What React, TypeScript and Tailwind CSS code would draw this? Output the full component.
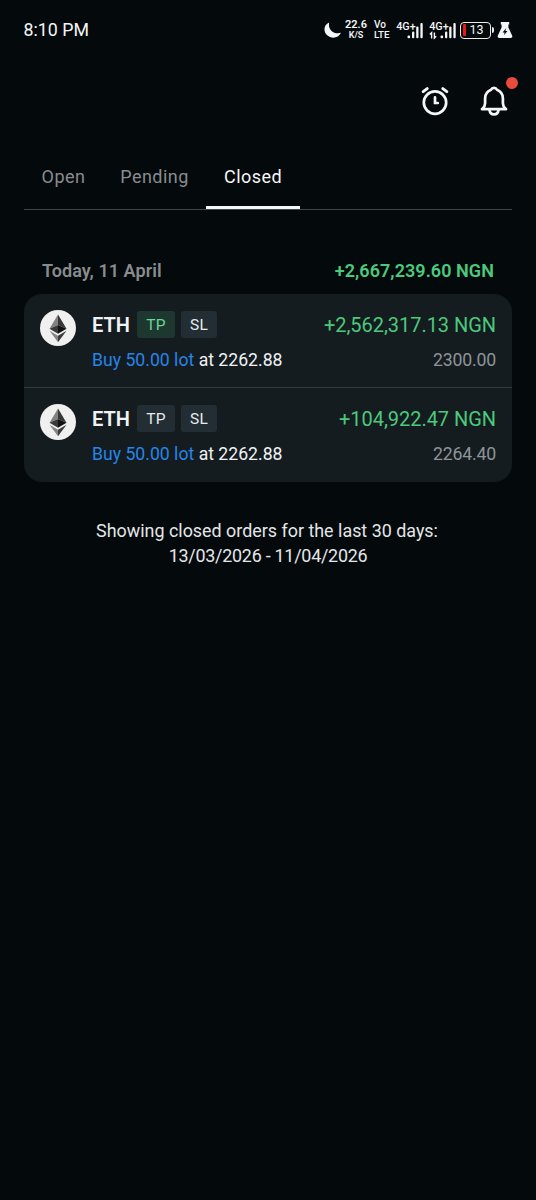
import React from "react";

function Moon() {
  return (
    <svg width="18" height="18" viewBox="0 0 18 18" fill="#f4f6f7">
      <path d="M5.2 1.4 C-.3 3.6 -1.1 10.4 3.2 14.3 C7.4 18.2 14.6 17.2 17 11.8 C10 13.6 3.7 9.2 5.2 1.4 Z" />
    </svg>
  );
}

function Signal({ arrows = false }: { arrows?: boolean }) {
  return (
    <svg width="28" height="25" viewBox="0 -3 28 25" fill="#f4f6f7">
      <text x="0.2" y="9.4" fontSize="11" fontWeight="500" fontFamily="Roboto, sans-serif" textLength="19.5" lengthAdjust="spacingAndGlyphs">
        4G+
      </text>
      {arrows && (
        <path d="M2.6 17.4V11.8L0.8 13.6M5.4 11.4V17L7.2 15.2" fill="none" stroke="#f4f6f7" strokeWidth="1.4" />
      )}
      <rect x="11.5" y="14.4" width="2.6" height="2.8" rx="1" />
      <rect x="16" y="10.4" width="2.3" height="6.8" rx="1" />
      <rect x="20.2" y="5.4" width="2.3" height="11.8" rx="1" />
      <rect x="24.4" y="2" width="2.3" height="15.2" rx="1" />
    </svg>
  );
}

function Battery() {
  return (
    <div className="flex items-center">
      <div className="flex h-[17px] w-[31px] items-center rounded-[4px] border-[1.5px] border-[#e9ebec] pl-[2px]">
        <span className="h-[12px] w-[3px] shrink-0 rounded-[1px] bg-[#f01414]" />
        <span className="w-[21px] text-center text-[12.5px] leading-none">13</span>
      </div>
      <span className="ml-px h-[6px] w-[2px] rounded-r bg-[#e9ebec]" />
    </div>
  );
}

function Flask() {
  return (
    <svg width="16" height="18" viewBox="0 0 16 18">
      <path d="M3.8 1H12.2V3.6H11.4V6.5L15 14.2C15.8 16 15.2 17 13.7 17H2.3C.8 17 .2 16 1 14.2L4.6 6.5V3.6H3.8Z" fill="#f4f6f7" />
      <path d="M9 7.3L5.6 11.4H7.6L7 14.2L10.4 10.1H8.4Z" fill="#04090c" />
    </svg>
  );
}

function StatusBar() {
  return (
    <header className="flex h-[60px] items-center justify-between pr-[23px] pl-[23.5px] text-[#f4f6f7]">
      <span className="text-[17.8px] leading-none">8:10 PM</span>
      <div className="flex items-center">
        <Moon />
        <div className="ml-[3px] flex w-[22px] flex-col items-center text-[11px] leading-[10px] font-semibold">
          <span className="relative -top-px">22.6</span>
          <span className="text-[9px] leading-[9px]">K/S</span>
        </div>
        <div className="ml-[7px] flex w-[16px] flex-col text-[10px] leading-[9.5px] font-medium">
          <span className="relative -top-[0.5px]">Vo</span>
          <span className="text-[9.8px]">LTE</span>
        </div>
        <div className="ml-[6px] flex gap-[5px]">
          <Signal />
          <Signal arrows />
        </div>
        <div className="ml-[3px]">
          <Battery />
        </div>
        <div className="ml-[3px]">
          <Flask />
        </div>
      </div>
    </header>
  );
}

function AlarmIcon() {
  return (
    <svg width="30" height="30" viewBox="0 0 30 30" fill="none" stroke="#f4f6f7" strokeWidth="2.7" strokeLinecap="round">
      <circle cx="15" cy="16.6" r="11.2" />
      <path d="M15 11.4V17H17.8" strokeLinejoin="miter" />
      <path d="M3.2 5.6L7.2 2.6M26.8 5.6L22.8 2.6" strokeWidth="3" />
    </svg>
  );
}

function BellIcon() {
  return (
    <svg width="30" height="32" viewBox="0 0 30 32" fill="none" stroke="#f4f6f7" strokeWidth="2.7" strokeLinecap="round" strokeLinejoin="round">
      <path d="M3 24.2H27M3.4 23.8C5.3 22 6.1 20.6 6.1 18.2V13.4C6.1 9.2 8.4 6.3 12 4.8C13.2 2.2 16.8 2.2 18 4.8C21.6 6.3 23.9 9.2 23.9 13.4V18.2C23.9 20.6 24.7 22 26.6 23.8" />
      <path d="M10.6 25.5C11 28 12.8 29.4 15 29.4C17.2 29.4 19 28 19.4 25.5" />
    </svg>
  );
}

function EthIcon() {
  return (
    <svg className="mt-px shrink-0" width="36" height="36" viewBox="0 0 36 36">
      <circle cx="18" cy="18" r="18" fill="#f0f0f0" />
      <path d="M18 4.5L9.5 18.8L18 15Z" fill="#828282" />
      <path d="M18 4.5L26.5 18.8L18 15Z" fill="#373737" />
      <path d="M9.5 18.8L18 15V23.8Z" fill="#393939" />
      <path d="M26.5 18.8L18 15V23.8Z" fill="#121212" />
      <path d="M9.5 20.8L18 25.7V32.3Z" fill="#858585" />
      <path d="M26.5 20.8L18 25.7V32.3Z" fill="#3c3c3b" />
    </svg>
  );
}

function Tag({ label, active = false }: { label: string; active?: boolean }) {
  return (
    <span
      className={
        "flex h-[27px] items-center justify-center rounded-[3px] pt-[2px] text-[15.5px] leading-none tracking-[0.2px] " +
        (label === "TP" ? "w-[38px] " : "w-[36px] ") +
        (active ? "bg-[#1e3730] text-[#6bd699]" : "bg-[#232d34] text-[#e6eaec]")
      }
    >
      {label}
    </span>
  );
}

type Order = { profit: string; close: string; tp: boolean };

const orders: Order[] = [
  { profit: "+2,562,317.13 NGN", close: "2300.00", tp: true },
  { profit: "+104,922.47 NGN", close: "2264.40", tp: false },
];

function OrderRow({ order }: { order: Order }) {
  return (
    <li className="flex h-[94px] border-b border-[#343c42] px-[16px] pt-[15px] last:border-b-0">
      <EthIcon />
      <div className="ml-[16px] flex-1">
        <div className="flex h-[32px] items-center">
          <span className="w-[45px] text-[20px] font-semibold text-[#f0f3f4]">ETH</span>
          <div className="-mt-px flex gap-[6px]">
            <Tag label="TP" active={order.tp} />
            <Tag label="SL" />
          </div>
          <span className="ml-auto text-[20px] tracking-[-0.04px] text-[#4cc97c]">{order.profit}</span>
        </div>
        <div className="mt-[5px] flex h-[28px] items-center justify-between text-[17.65px] whitespace-nowrap">
          <span className="text-[#f0f3f4]">
            <span className="text-[#2685e8]">Buy 50.00 lot</span> at 2262.88
          </span>
          <span className="tracking-[-0.15px] text-[#8f9498]">{order.close}</span>
        </div>
      </div>
    </li>
  );
}

export default function App() {
  return (
    <div className="min-h-[1200px] w-[536px] bg-[#04090c] font-['Roboto',sans-serif]">
      <StatusBar />
      <div className="flex h-[89px] items-start justify-end gap-[29px] pt-[25px] pr-[27px]">
        <button className="h-[32px]">
          <AlarmIcon />
        </button>
        <button className="relative h-[32px]">
          <BellIcon />
          <span className="absolute -top-[8px] -right-[9px] h-[12px] w-[12px] rounded-full bg-[#e74c3c]" />
        </button>
      </div>
      <nav className="mx-[24px] flex h-[61px] border-b border-[#42474a] text-[18px] tracking-[0.45px] text-[#898c8e]">
        <button className="h-[54px] w-[79px]">Open</button>
        <button className="h-[54px] w-[103px]">Pending</button>
        <button className="flex h-[60px] w-[94px] flex-col items-center border-b-[3px] border-[#f4f6f7] text-[#f4f6f7]">
          <span className="leading-[55px]">Closed</span>
        </button>
      </nav>
      <main className="mx-[24px] mt-[46px]">
        <div className="flex h-[38px] justify-between pr-[18px] pl-[18px] text-[18px] leading-[30px] font-semibold tracking-[0.06px]">
          <h2 className="text-[#898c8e]">Today, 11 April</h2>
          <span className="text-[#4cc97c]">+2,667,239.60 NGN</span>
        </div>
        <ul className="overflow-hidden rounded-[18px] bg-[#141c20]">
          {orders.map((order) => (
            <OrderRow key={order.profit} order={order} />
          ))}
        </ul>
        <p className="mt-[36px] pr-[2px] text-center text-[17.9px] leading-[25px] text-[#e4e7e8]">
          Showing closed orders for the last 30 days:
          <br />
          <span className="pl-[2px] tracking-[-0.24px]">13/03/2026 - 11/04/2026</span>
        </p>
      </main>
    </div>
  );
}
